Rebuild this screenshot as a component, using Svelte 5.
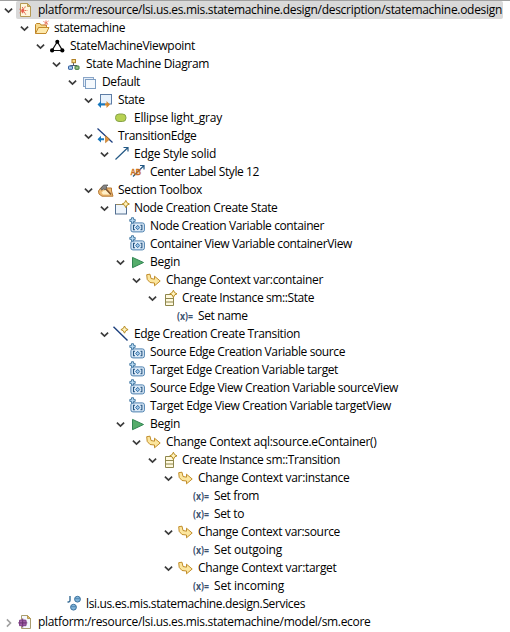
<script>
  // depth, icon, label, label width in px, expander: 1 open, 0 none, 2 closed
  const rows = [
    [0, 'odesign', 'platform:/resource/lsi.us.es.mis.statemachine.design/description/statemachine.odesign', 464, 1],
    [1, 'folder', 'statemachine', 71, 1],
    [2, 'viewpoint', 'StateMachineViewpoint', 125, 1],
    [3, 'diagram', 'State Machine Diagram', 123, 1],
    [4, 'layer', 'Default', 38, 1],
    [5, 'node', 'State', 26.5, 1],
    [6, 'ellipse', 'Ellipse light_gray', 88, 0],
    [5, 'edge', 'TransitionEdge', 78.5, 1],
    [6, 'edgestyle', 'Edge Style solid', 82, 1],
    [7, 'label', 'Center Label Style 12', 109, 0],
    [5, 'toolbox', 'Section Toolbox', 84, 1],
    [6, 'newnode', 'Node Creation Create State', 143.5, 1],
    [7, 'variable', 'Node Creation Variable container', 174, 0],
    [7, 'variable', 'Container View Variable containerView', 202, 0],
    [7, 'begin', 'Begin', 30, 1],
    [8, 'context', 'Change Context var:container', 157, 1],
    [9, 'instance', 'Create Instance sm::State', 132, 1],
    [10, 'set', 'Set name', 49.5, 0],
    [6, 'newedge', 'Edge Creation Create Transition', 166, 1],
    [7, 'variable', 'Source Edge Creation Variable source', 195, 0],
    [7, 'variable', 'Target Edge Creation Variable target', 188, 0],
    [7, 'variable', 'Source Edge View Creation Variable sourceView', 248, 0],
    [7, 'variable', 'Target Edge View Creation Variable targetView', 241, 0],
    [7, 'begin', 'Begin', 30, 1],
    [8, 'context', 'Change Context aql:source.eContainer()', 210.5, 1],
    [9, 'instance', 'Create Instance sm::Transition', 158, 1],
    [10, 'context', 'Change Context var:instance', 151.5, 1],
    [11, 'set', 'Set from', 45, 0],
    [11, 'set', 'Set to', 30, 0],
    [10, 'context', 'Change Context var:source', 142, 1],
    [11, 'set', 'Set outgoing', 68, 0],
    [10, 'context', 'Change Context var:target', 138.5, 1],
    [11, 'set', 'Set incoming', 70, 0],
    [3, 'services', 'lsi.us.es.mis.statemachine.design.Services', 219, 0],
    [0, 'ecore', 'platform:/resource/lsi.us.es.mis.statemachine/model/sm.ecore', 332.5, 2]
  ];

  // Spreads the label's letters over its nominal width.
  function fit(el, width) {
    const natural = el.getBoundingClientRect().width;
    el.style.letterSpacing = (width - natural) / el.textContent.length + 'px';
  }
</script>

{#snippet star(x, y)}
  <path transform="translate({x} {y})" d="M0-3.6L1.2-1.2L3.6 0L1.2 1.2L0 3.6L-1.2 1.2L-3.6 0L-1.2-1.2Z" fill="#fff3bd" stroke="#b98d22" stroke-width="1" />
{/snippet}

{#snippet page()}
  <path d="M2.5 1.5H9.5L12.5 4.5V14.5H2.5Z" fill="#fff7dc" stroke="#b79a54" />
  <path d="M9.5 1.5V4.5H12.5Z" fill="#e3bd62" stroke="#b79a54" />
{/snippet}

{#snippet icon(name)}
  <svg class="icon" viewBox="0 0 16 16">
    {#if name === 'odesign'}
      {@render page()}
      <path d="M7.5 4.5L4.5 8.5L8 12.5M1.5 7L4.5 8.5L1.5 11M4.5 8.5H9.5M4.5 5L4.5 12" fill="none" stroke="#e46d56" stroke-width="1.1" stroke-dasharray="1.6 .7" />
      <circle cx="4.8" cy="8.5" r="1.5" fill="#e65a48" />
    {:else if name === 'folder'}
      <path d="M1.5 13.5V4.5L2.5 3.5H6L7 5H12.5V7.5" fill="#f7d98c" stroke="#bd8429" />
      <path d="M1.5 13.5L4.5 7.5H15L12 13.5Z" fill="#fde9ad" stroke="#c48a2c" />
      <path d="M12 .5V6M9.5 1.5L14.5 4.5M14.5 1L9.5 5" stroke="#e8664c" stroke-dasharray="1.4 .6" />
    {:else if name === 'viewpoint'}
      <path d="M7.3 3.7L2 12.5H12.5Z" fill="none" stroke="#111" stroke-width="1.2" />
      <circle cx="7.3" cy="3.7" r="2" fill="#000" />
      <circle cx="2.1" cy="12.4" r="2.1" fill="#000" />
      <circle cx="12.3" cy="12.4" r="2.1" fill="#000" />
    {:else if name === 'diagram'}
      <path d="M7.5 6V9.5M4.5 11V9.5H11V11" fill="none" stroke="#555e70" />
      <rect x="6" y="3.5" width="3.5" height="3.2" fill="#f8df8c" stroke="#b18228" />
      <rect x="2.5" y="10" width="4" height="3.3" rx=".5" fill="#a9c9ea" stroke="#315f9f" />
      <rect x="9" y="10" width="4" height="3.3" rx=".5" fill="#9bc68b" stroke="#397336" />
    {:else if name === 'layer'}
      <rect x="1.5" y="3.5" width="10" height="9" fill="#e6eef8" stroke="#8ba6c8" />
      <rect x="3.5" y="5.5" width="10" height="9" fill="#f5f9fd" stroke="#7f9fc4" />
    {:else if name === 'node'}
      <rect x="2.5" y="2.5" width="11" height="9.5" fill="#e8f2fc" stroke="#5e7da6" />
      <path d="M-.5 12.5L3 9V11.5H7V13.5H3V16Z" fill="#1778be" />
      <path d="M12 12.5L8.5 9V11.5H7V13.5H8.5V16Z" fill="#d6882c" />
    {:else if name === 'ellipse'}
      <rect x="1.5" y="4" width="10.5" height="7.5" rx="3.5" fill="#b7d152" stroke="#87a34a" />
    {:else if name === 'edge'}
      <path d="M-.5 .5L14.5 14.5" stroke="#1d3f80" stroke-width="1.3" />
      <path d="M-.5 11.2L3 7.8V10.2H6V12.2H3V14.6Z" fill="#1778be" />
      <path d="M11.5 11.2L7.5 7.7V14.7Z" fill="#e0933a" stroke="#b77224" stroke-width=".6" />
    {:else if name === 'edgestyle'}
      <path d="M1.5 13.5L14 1.5M9.5 1.5H14V5.5" fill="none" stroke="#245985" stroke-width="1.2" />
    {:else if name === 'label'}
      <path d="M3 12.5L14 1.5M10 1.5H14V5.5" fill="none" stroke="#245985" stroke-width="1.2" />
      <text x="0.6" y="11.4" class="ab" textLength="10.5" lengthAdjust="spacingAndGlyphs">AB</text>
    {:else if name === 'toolbox'}
      <path d="M.5 9L3 5.5L6 4L9 6H13.5V9L15 14.2H4L1 12Z" fill="#eebb72" stroke="#b77a36" />
      <path d="M3.5 10.5L7 7.5L12.5 12.5H5Z" fill="#fff0c8" />
      <path d="M7 6L13 12.5" stroke="#80542d" stroke-width="1.7" />
      <path d="M2.5 7L5.5 3H10L8.3 4.7L8.7 6.2L6.7 8L5.5 6.7L4 8.2Z" fill="#858585" stroke="#4d4d4d" stroke-width=".7" />
    {:else if name === 'newnode'}
      <rect x="1.5" y="4.5" width="11" height="9.5" fill="#eef5fc" stroke="#536f91" />
      <path d="M2 4.5H12.5" stroke="#9a8a60" />
      {@render star(11.8, 4)}
    {:else if name === 'variable'}
      <rect x=".9" y="4.9" width="13.5" height="9" rx="2" fill="#dbeaf8" stroke="#4c7fae" />
      <path d="M5 7.2H3.5V11.8H5M10.4 7.2H11.9V11.8H10.4" fill="none" stroke="#245481" stroke-width="1.1" />
      <path d="M7.7 7.3L9.7 9.5L7.7 11.7L5.7 9.5Z" fill="#9dc6e9" stroke="#2c6598" stroke-width=".9" />
      <path d="M1.5 -.3H3.5V1.4H5.2V3.4H3.5V5.1H1.5V3.4H-.2V1.4H1.5Z" fill="#b9dbf4" stroke="#3f759f" stroke-width=".9" />
    {:else if name === 'begin'}
      <path d="M2.5 3.4L13.5 8.5L2.5 13.7Z" fill="#55ad6b" stroke="#318553" stroke-linejoin="round" />
    {:else if name === 'context'}
      <path d="M.7 2.7L4 2.2L5 6.5L8.5 7.2V4.2L14.2 9L8.5 13.8V11L4 10.5L1.2 7.4Z" fill="#fce69e" stroke="#c28e2b" stroke-linejoin="round" />
    {:else if name === 'instance'}
      <path d="M3.5 4.5H11.5V15.5H3.5ZM3.5 8.5H11.5M3.5 12H11.5" fill="#fff9df" stroke="#8e874d" />
      {@render star(11.4, 3.8)}
    {:else if name === 'set'}
      <text x="-1" y="11.5" class="assign" textLength="16" lengthAdjust="spacingAndGlyphs">(x)=</text>
    {:else if name === 'newedge'}
      <path d="M-.5 .8L13.5 14.5" stroke="#1b3e7c" stroke-width="1.4" />
      {@render star(10.5, 3.6)}
    {:else if name === 'services'}
      <path d="M4 0V4.6Q4 6 2.6 6H1.5" fill="none" stroke="#366b94" stroke-width="1.4" />
      <circle cx="11.5" cy="3.2" r="2.9" fill="#82b5da" stroke="#3a719d" />
      <circle cx="7.5" cy="11.2" r="2.9" fill="#82b5da" stroke="#3a719d" />
      <path d="M9 2.7H14M5 10.7H10" stroke="#4f87b2" />
    {:else if name === 'ecore'}
      <path d="M3.5 1.5H9.5L12.5 4.5V14.5H3.5Z" fill="#f4f7fc" stroke="#a99d70" />
      <path d="M9.5 1.5V4.5H12.5Z" fill="#e2bf67" stroke="#b79a54" />
      <rect x="1" y="5.7" width="7.4" height="6.4" rx="1.5" fill="#a05fa7" />
      <path d="M4.7 4.5V13.5M.2 8.9H9.3" stroke="#68306f" />
      <path d="M1.5 6.2H8V11.7H1.5Z" fill="none" stroke="#7a3b82" stroke-width=".8" />
    {/if}
  </svg>
{/snippet}

<main>
  {#each rows as [depth, name, text, width, expander], i}
    <div class="row" style="padding-left: {2 + depth * 16}px">
      <svg class="icon" viewBox="0 0 16 16">
        {#if expander === 1}
          <path d="M2.9 6.6L6.5 10.1L10.1 6.6" fill="none" stroke="#3c3c3c" stroke-width="1.7" />
        {:else if expander === 2}
          <path d="M4.9 5.4L8.5 9L4.9 12.6" fill="none" stroke="#a0a0a0" stroke-width="1.6" />
        {/if}
      </svg>
      <span class="item" class:selected={i === 0}>
        {@render icon(name)}
        <span class="text" use:fit={width}>{text}</span>
      </span>
    </div>
  {/each}
</main>

<style>
  :global(body) {
    margin: 0;
    background: #fff;
    overflow: hidden;
  }
  main {
    box-sizing: border-box;
    width: 510px;
    height: 632px;
    border-top: 1px solid #a0a0a0;
    background: #fff;
    color: #000;
    font: 12px/18px "Open Sans", "Noto Sans", sans-serif;
    overflow: hidden;
  }
  .row,
  .item {
    display: flex;
    align-items: center;
    height: 18px;
    white-space: nowrap;
  }
  .item {
    padding-right: 1px;
  }
  .selected {
    background: #d9d9d9;
    border-radius: 2px;
    margin-left: -2px;
    padding-left: 2px;
  }
  .icon {
    flex: none;
    width: 16px;
    height: 16px;
    overflow: visible;
  }
  .text {
    margin-left: 4px;
  }
  .ab {
    font: bold 8.5px "Liberation Sans", sans-serif;
    fill: #c96f20;
    stroke: #c96f20;
    stroke-width: 0.3px;
  }
  .assign {
    font: bold 10px "Open Sans", sans-serif;
    fill: #3c526f;
  }
</style>
